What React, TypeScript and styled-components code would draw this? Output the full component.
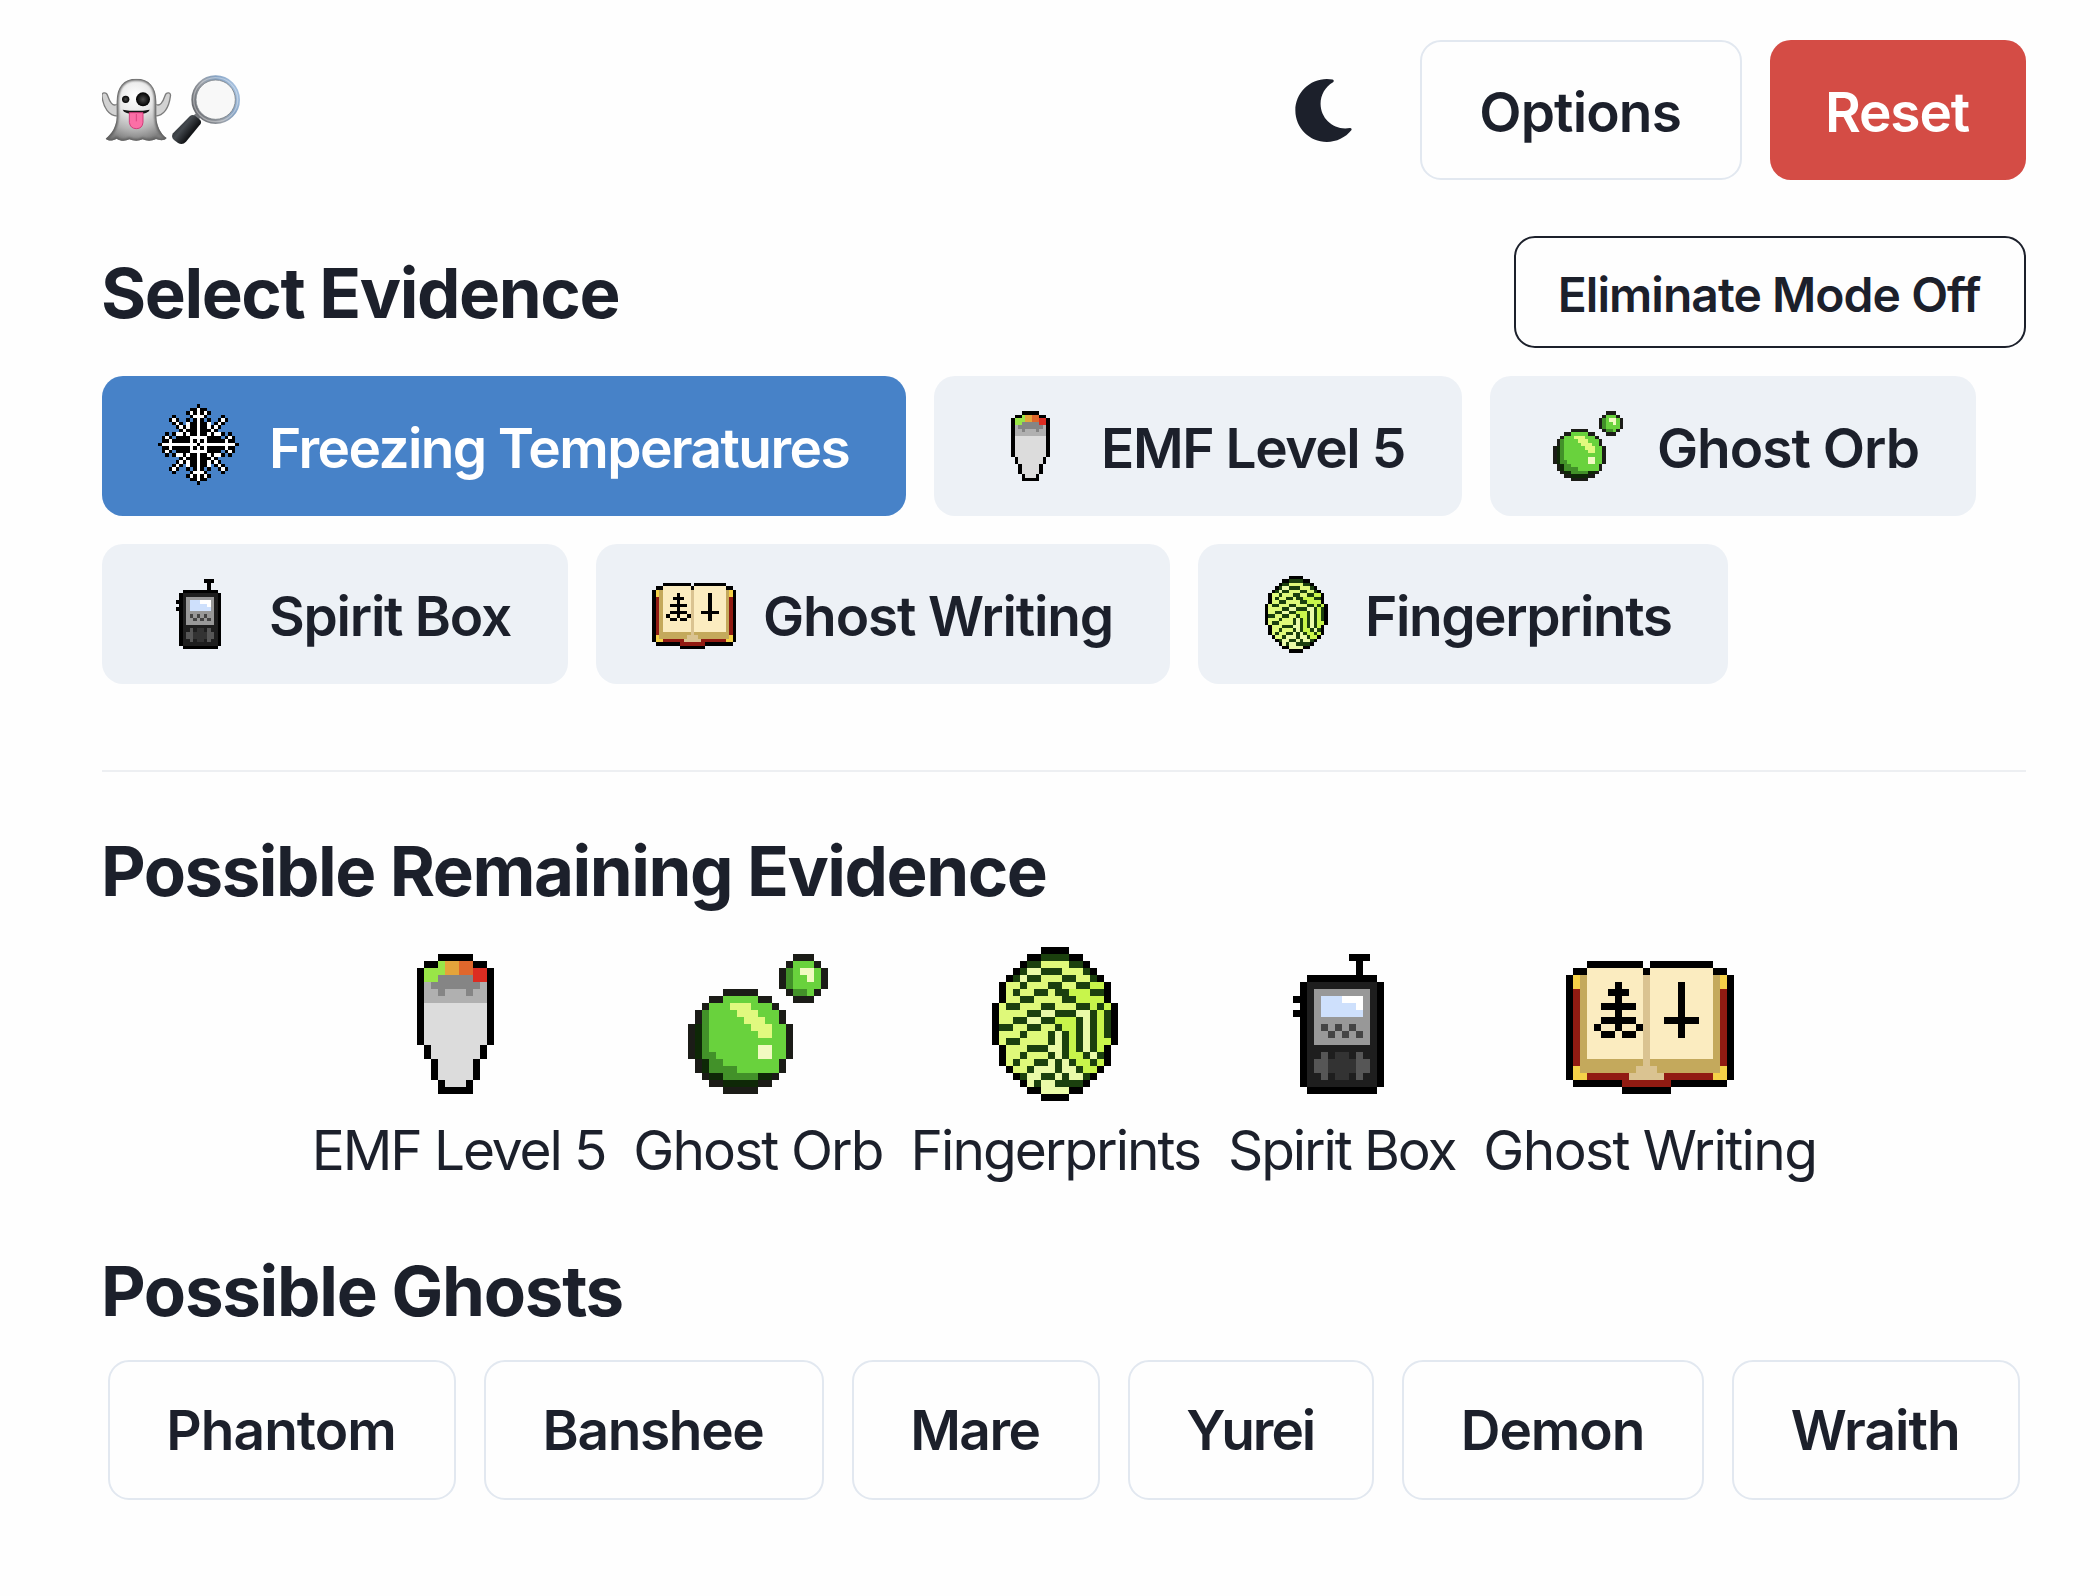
import React from 'react';
import styled, { createGlobalStyle, css } from 'styled-components';
import { FaMoon } from 'react-icons/fa';

const INK = '#1c202b';

const GlobalStyle = createGlobalStyle`
  *, *::before, *::after { box-sizing: border-box; }
  body {
    margin: 0;
    background: #fefefe;
    color: ${INK};
    font-family: Inter, Roboto, "Liberation Sans", sans-serif;
    -webkit-font-smoothing: antialiased;
  }
`;

const Page = styled.main`
  display: flex;
  flex-direction: column;
  min-height: 1596px;
  padding: 40px 74px 96px 102px;
`;

const Header = styled.header`
  display: flex;
  align-items: center;
  justify-content: space-between;
  height: 140px;
`;

const Logo = styled.svg`
  display: block;
  width: 140px;
  height: 80px;
`;

const Actions = styled.div`
  display: flex;
  align-items: center;
  gap: 28px;
`;

const ThemeToggle = styled.button`
  display: flex;
  align-items: center;
  justify-content: center;
  width: 140px;
  height: 140px;
  margin-right: -1px;
  padding: 0;
  border: 0;
  background: none;
  color: ${INK};
  font-size: 63px;
`;

type Variant = 'outline' | 'danger' | 'selected' | 'muted' | 'strong';

const variants = {
  outline: css`border: 2px solid #e2e8f0; background: transparent; color: ${INK};`,
  danger: css`background: #d44c45; color: #fff;`,
  selected: css`background: #4782c8; color: #fff;`,
  muted: css`background: #edf1f6; color: ${INK};`,
  strong: css`border: 2px solid ${INK}; background: transparent; color: ${INK};`,
};

const Button = styled.button<{ $variant: Variant; $tracking?: number; $pad?: number; $drop?: number }>`
  display: inline-flex;
  flex: none;
  align-items: center;
  gap: 28px;
  height: 140px;
  padding: 0 ${p => p.$pad ?? 56}px;
  border: 0;
  border-radius: 21px;
  font-family: inherit;
  font-size: 55px;
  font-weight: 600;
  line-height: 66px;
  letter-spacing: ${p => p.$tracking ?? 0}px;
  white-space: nowrap;
  ${p => variants[p.$variant]}

  span {
    margin: 0 1px 0 -1px;
    padding-top: ${p => p.$drop ?? 4}px;
  }
`;

const ModeButton = styled(Button)`
  height: 112px;
  font-size: 48px;
`;

const TitleBar = styled.div`
  display: flex;
  align-items: center;
  justify-content: space-between;
  height: 112px;
  margin-top: 56px;
`;

const Heading = styled.h2<{ $tracking: number; $drop?: number }>`
  margin: 0 0 0 -1px;
  padding-top: ${p => p.$drop ?? 0}px;
  font-size: 69px;
  font-weight: 700;
  line-height: 84px;
  letter-spacing: ${p => p.$tracking}px;
`;

const EvidenceList = styled.div`
  display: flex;
  flex-wrap: wrap;
  gap: 28px;
  margin-top: 28px;
`;

const Divider = styled.hr`
  width: 100%;
  height: 2px;
  margin: 86px 0 57px;
  border: 0;
  background: #edeff2;
`;

const RemainingList = styled.div`
  display: flex;
  justify-content: center;
  gap: 28px;
  margin-top: 27px;
`;

const RemainingItem = styled.figure`
  display: flex;
  flex-direction: column;
  align-items: center;
  margin: 0;
`;

const RemainingLabel = styled.figcaption<{ $tracking: number }>`
  font-size: 55px;
  line-height: 84px;
  letter-spacing: ${p => p.$tracking}px;
  white-space: nowrap;
`;

const GhostSection = styled.section`
  margin-top: 57px;
`;

const GhostList = styled.div`
  display: flex;
  justify-content: center;
  gap: 28px;
  margin-top: 27px;
`;

const Sprite = styled.svg<{ $size: number }>`
  display: block;
  flex: none;
  width: ${p => p.$size}px;
  height: ${p => p.$size}px;
`;

type Block = [x: number, y: number, w: number, h: number];
type Layer = [color: string, blocks: Block[]];

/* Turns rows of palette letters into horizontal runs of pixels. */
function fromRows(rows: string[], palette: Record<string, string>, dx: number, dy: number): Layer[] {
  const found: Record<string, Block[]> = {};
  rows.forEach((row, y) => {
    let x = 0;
    while (x < row.length) {
      let end = x + 1;
      while (end < row.length && row[end] === row[x]) end += 1;
      if (palette[row[x]]) (found[row[x]] ??= []).push([x + dx, y + dy, end - x, 1]);
      x = end;
    }
  });
  return Object.entries(found).map(([key, blocks]) => [palette[key], blocks]);
}

const emf: Layer[] = [
  ['#000', [[9, 2, 5, 1], [7, 3, 2, 1], [14, 3, 2, 1], [6, 4, 1, 11], [16, 4, 1, 11], [7, 15, 1, 2], [15, 15, 1, 2], [8, 17, 1, 3], [14, 17, 1, 3], [9, 20, 1, 1], [13, 20, 1, 1], [9, 21, 5, 1]]],
  ['#dcdcdc', [[7, 9, 9, 6], [8, 15, 7, 2], [9, 17, 5, 3], [10, 20, 3, 1]]],
  ['#b0b0b0', [[7, 6, 9, 3]]],
  ['#858585', [[9, 5, 5, 1], [8, 6, 7, 1], [9, 7, 1, 1], [13, 7, 1, 1]]],
  ['#99e548', [[9, 3, 1, 2], [7, 4, 2, 2]]],
  ['#e4a43b', [[10, 3, 2, 2]]],
  ['#e0672c', [[12, 3, 2, 2]]],
  ['#dc2c22', [[14, 4, 2, 2]]],
];

const orb: Layer[] = [
  ['#1b1c17', [[7, 7, 5, 1], [5, 8, 2, 1], [12, 8, 2, 1], [4, 9, 1, 1], [14, 9, 1, 1], [3, 10, 1, 2], [15, 10, 1, 2], [2, 12, 1, 5], [16, 12, 1, 5], [3, 17, 1, 2], [15, 17, 1, 2], [4, 19, 1, 1], [14, 19, 1, 1], [5, 20, 2, 1], [12, 20, 2, 1], [7, 21, 5, 1], [17, 2, 3, 1], [16, 3, 1, 1], [20, 3, 1, 1], [15, 4, 1, 3], [21, 4, 1, 3], [16, 7, 1, 1], [20, 7, 1, 1], [17, 8, 3, 1]]],
  ['#69d23d', [[7, 8, 5, 1], [5, 9, 9, 1], [5, 10, 10, 2], [5, 12, 11, 5], [5, 17, 10, 2], [17, 3, 3, 5], [20, 4, 1, 3]]],
  ['#429129', [[4, 10, 1, 7], [5, 16, 1, 1], [5, 17, 2, 1], [5, 18, 4, 1], [7, 19, 5, 1], [16, 4, 1, 3], [17, 7, 2, 1]]],
  ['#0e2807', [[3, 12, 1, 5], [4, 17, 1, 2], [5, 19, 2, 1], [12, 19, 2, 1], [7, 20, 5, 1]]],
  ['#e1f97f', [[8, 9, 3, 1], [9, 10, 3, 1], [10, 11, 3, 1], [11, 12, 3, 1], [12, 13, 2, 1]]],
  ['#f1fac1', [[12, 15, 2, 2], [18, 4, 2, 1], [19, 5, 1, 1]]],
];

const spirit: Layer[] = [
  ['#000', [[13, 2, 3, 1], [14, 3, 1, 2], [7, 5, 10, 1], [6, 6, 1, 15], [17, 6, 1, 15], [7, 21, 10, 1], [5, 8, 1, 1], [5, 10, 1, 1]]],
  ['#1e1e1e', [[7, 6, 10, 15]]],
  ['#989898', [[8, 7, 8, 8]]],
  ['#cee0fc', [[9, 8, 6, 3]]],
  ['#fff', [[12, 8, 3, 1], [14, 9, 1, 1]]],
  ['#444', [[9, 12, 1, 1], [11, 12, 1, 1], [13, 12, 1, 1], [10, 13, 1, 1], [12, 13, 1, 1], [14, 13, 1, 1]]],
  ['#565656', [[8, 17, 2, 2], [9, 16, 1, 4], [14, 16, 1, 4], [14, 17, 2, 2]]],
  ['#333', [[11, 16, 2, 4], [10, 17, 4, 2]]],
];

const book: Layer[] = [
  ['#911b12', [[1, 7, 1, 11], [22, 7, 1, 11], [3, 19, 6, 1], [14, 19, 7, 1], [8, 20, 7, 1]]],
  ['#f5d148', [[1, 5, 1, 2], [22, 5, 1, 2], [1, 18, 1, 1], [1, 19, 2, 1], [22, 18, 1, 1], [21, 19, 2, 1]]],
  ['#c4a95c', [[2, 5, 1, 14], [21, 5, 1, 14], [2, 17, 9, 1], [12, 17, 10, 1], [2, 18, 8, 1], [13, 18, 9, 1]]],
  ['#fbecc0', [[3, 4, 8, 13], [12, 4, 9, 13]]],
  ['#dac391', [[11, 5, 1, 13], [10, 18, 3, 1], [9, 19, 5, 1]]],
  ['#000', [[3, 3, 8, 1], [12, 3, 9, 1], [1, 4, 2, 1], [11, 4, 1, 1], [21, 4, 2, 1], [0, 5, 1, 15], [23, 5, 1, 15], [1, 20, 7, 1], [15, 20, 8, 1], [8, 21, 7, 1], [7, 6, 1, 7], [6, 7, 3, 1], [5, 9, 5, 1], [5, 11, 5, 1], [4, 12, 1, 1], [10, 12, 1, 1], [5, 13, 2, 1], [8, 13, 2, 1], [16, 6, 1, 8], [14, 11, 5, 1]]],
];

const fingerprint = fromRows([
  '.......KKKK.......',
  '.....KKDDDDKK.....',
  '....KDDYYYYDDK....',
  '...KDLLDDDYYYDK...',
  '..KDLDDYYYDDYYDK..',
  '.KYYDYYYDDYYDDGGK.',
  '.KYDYYDDYDDGGGDDK.',
  '.KYYDDYYYYDDGGGGK.',
  'KYDDYYYDDYYYDDGDGK',
  'KYYYYDDLLDDDLLDGDK',
  'KYYDDLLDDGGGDLDGDK',
  'KDDYYDDYYDGGDLDGDK',
  'KYYYDYYYDLDGDLDGDK',
  'KYDDYYYYDLDGDLDGGK',
  '.KYYYDDDLLDGDLDGK.',
  '.KYYDYYYDLDGGDLDK.',
  '.KYDYYDDLDLDGGDGK.',
  '..KYYDLLLDLLDGGK..',
  '...KDLLDDLDLLDK...',
  '....KLDLLDDDDK....',
  '.....KKLLLLKK.....',
  '.......KKKK.......',
], { K: '#000', D: '#1b400e', Y: '#dff97a', L: '#eafaa8', G: '#c8f54b' }, 3, 1);

/* The snowflake is symmetric: only its upper left quarter, with both axes, is stored. */
const flakeQuarter = [
  '...........K',
  '.........KKW',
  '........KWKW',
  '....K....KWW',
  '...KWK..K.KW',
  '....KWK.WKKW',
  '.....KWKWKKW',
  '......KWKKKW',
  '..K.KWWKWKKW',
  '.KWK.KKKKWWW',
  '.KKWKKKKKWKW',
  'KWWWWWWWWWWK',
];
const mirrored = flakeQuarter.map(r => r + r.slice(0, -1).split('').reverse().join(''));
const snowflake = fromRows([...mirrored, ...mirrored.slice(0, -1).reverse()], { K: '#000', W: '#fff' }, 0, 0);

function PixelArt({ layers, size }: { layers: Layer[]; size: number }) {
  return (
    <Sprite $size={size} viewBox="0 0 24 24" shapeRendering="crispEdges" aria-hidden>
      {layers.map(([color, blocks], i) => (
        <path key={i} fill={color} d={blocks.map(([x, y, w, h]) => `M${x} ${y}h${w}v${h}h${-w}z`).join('')} />
      ))}
    </Sprite>
  );
}

const BODY = 'M80 125C80 80 101 56 139 56S199 80 199 125V170C200 198 212 222 230 234C224 242 210 242 198 237C184 244 170 243 158 238C146 244 130 243 118 238C106 244 92 244 80 236C68 243 54 243 47 236C66 222 79 200 80 172Z';

function GhostLogo() {
  return (
    <Logo viewBox="36 30 420 240" aria-hidden>
      <defs>
        <radialGradient id="ghostBody" cx="0.48" cy="0.28" r="0.72">
          <stop offset="0" stopColor="#fff" />
          <stop offset="0.4" stopColor="#e8e8e8" />
          <stop offset="0.75" stopColor="#b4b4b4" />
          <stop offset="1" stopColor="#808080" />
        </radialGradient>
        <radialGradient id="eye"><stop offset="0" stopColor="#4a4a4a" /><stop offset="0.7" stopColor="#161616" /><stop offset="1" stopColor="#000" /></radialGradient>
        <linearGradient id="rim" x1="0" y1="0.7" x2="1" y2="0.2">
          <stop offset="0" stopColor="#6b6d72" />
          <stop offset="0.4" stopColor="#9aa0a8" />
          <stop offset="0.7" stopColor="#86a3c4" />
          <stop offset="1" stopColor="#a9c4e2" />
        </linearGradient>
        <linearGradient id="handle" x1="0" y1="0" x2="1" y2="0.8">
          <stop offset="0" stopColor="#15171a" />
          <stop offset="0.45" stopColor="#44494e" />
          <stop offset="0.7" stopColor="#16181b" />
          <stop offset="1" stopColor="#000" />
        </linearGradient>
        <filter id="soft" x="-5%" y="-5%" width="110%" height="110%"><feGaussianBlur stdDeviation="3" /></filter>
        <clipPath id="bodyClip"><path d={BODY} /></clipPath>
      </defs>
      <g fill="#d2d2d2" stroke="#7c7c7c" strokeWidth="4">
        <path d="M82 132C68 142 59 125 53 107C49 95 33 96 36 110C40 141 56 169 84 168Z" />
        <path d="M196 132C210 142 219 125 225 107C229 95 245 96 241 110C237 141 222 169 194 168Z" />
      </g>
      <path fill="url(#ghostBody)" d={BODY} />
      <g clipPath="url(#bodyClip)">
        <path fill="none" stroke="#5e5e5e" strokeWidth="11" filter="url(#soft)" d={BODY} />
      </g>
      <circle cx="107" cy="118" r="11" fill="url(#eye)" />
      <circle cx="159" cy="118" r="21" fill="url(#eye)" />
      <path fill="#151515" d="M98 149Q139 156 179 149Q177 161 139 163Q102 162 98 149Z" />
      <path fill="#fb6fa6" stroke="#d23c7b" strokeWidth="3" d="M118 158H159V187Q157 206 139 206T118 187Z" />
      <path fill="none" stroke="#d23c7b" strokeWidth="2.5" d="M139 162V184" />
      <path fill="#777a7e" d="M309 167L322 157L334 169L325 181Z" />
      <path fill="url(#handle)" d="M300 168Q307 162 315 167L330 179Q336 185 331 193L288 245Q278 256 264 249L252 240Q242 231 249 220Z" />
      <circle cx="377" cy="119" r="66" fill="#f8f8f8" stroke="url(#rim)" strokeWidth="14" />
      <circle cx="377" cy="119" r="59" fill="none" stroke="#7a7f86" strokeWidth="2.5" />
      <circle cx="377" cy="119" r="66" fill="none" stroke="#fff" strokeOpacity="0.35" strokeWidth="4" />
    </Logo>
  );
}

const evidence: { name: string; art: Layer[]; tracking: number; active?: boolean }[] = [
  { name: 'Freezing Temperatures', art: snowflake, tracking: -1.59, active: true },
  { name: 'EMF Level 5', art: emf, tracking: -1.42 },
  { name: 'Ghost Orb', art: orb, tracking: -1.0 },
  { name: 'Spirit Box', art: spirit, tracking: -1.24 },
  { name: 'Ghost Writing', art: book, tracking: -1.13 },
  { name: 'Fingerprints', art: fingerprint, tracking: -1.43 },
];

const remaining = [
  { name: 'EMF Level 5', art: emf, tracking: -2.12 },
  { name: 'Ghost Orb', art: orb, tracking: -1.9 },
  { name: 'Fingerprints', art: fingerprint, tracking: -1.97 },
  { name: 'Spirit Box', art: spirit, tracking: -2.12 },
  { name: 'Ghost Writing', art: book, tracking: -1.6 },
];

const ghosts = [
  { name: 'Phantom', tracking: -0.95 },
  { name: 'Banshee', tracking: -1.34 },
  { name: 'Mare', tracking: -1.5 },
  { name: 'Yurei', tracking: -2.06 },
  { name: 'Demon', tracking: -1.1 },
  { name: 'Wraith', tracking: -0.97 },
];

export default function App() {
  return (
    <>
      <GlobalStyle />
      <Page>
        <Header>
          <GhostLogo />
          <Actions>
            <ThemeToggle aria-label="Toggle dark mode"><FaMoon /></ThemeToggle>
            <Button $variant="outline" $pad={58} $tracking={-0.85}><span>Options</span></Button>
            <Button $variant="danger" $tracking={-1.18}><span>Reset</span></Button>
          </Actions>
        </Header>

        <TitleBar>
          <Heading $tracking={-1.43} $drop={2}>Select Evidence</Heading>
          <ModeButton $variant="strong" $pad={42.5} $drop={5} $tracking={-0.96}><span>Eliminate Mode Off</span></ModeButton>
        </TitleBar>
        <EvidenceList>
          {evidence.map(e => (
            <Button key={e.name} $variant={e.active ? 'selected' : 'muted'} $tracking={e.tracking}>
              <PixelArt layers={e.art} size={84} />
              <span>{e.name}</span>
            </Button>
          ))}
        </EvidenceList>

        <Divider />

        <Heading $tracking={-1.47}>Possible Remaining Evidence</Heading>
        <RemainingList>
          {remaining.map(e => (
            <RemainingItem key={e.name}>
              <PixelArt layers={e.art} size={168} />
              <RemainingLabel $tracking={e.tracking}>{e.name}</RemainingLabel>
            </RemainingItem>
          ))}
        </RemainingList>

        <GhostSection>
          <Heading $tracking={-1.28}>Possible Ghosts</Heading>
          <GhostList>
            {ghosts.map(g => (
              <Button key={g.name} $variant="outline" $pad={57.3} $drop={0} $tracking={g.tracking}><span>{g.name}</span></Button>
            ))}
          </GhostList>
        </GhostSection>
      </Page>
    </>
  );
}
